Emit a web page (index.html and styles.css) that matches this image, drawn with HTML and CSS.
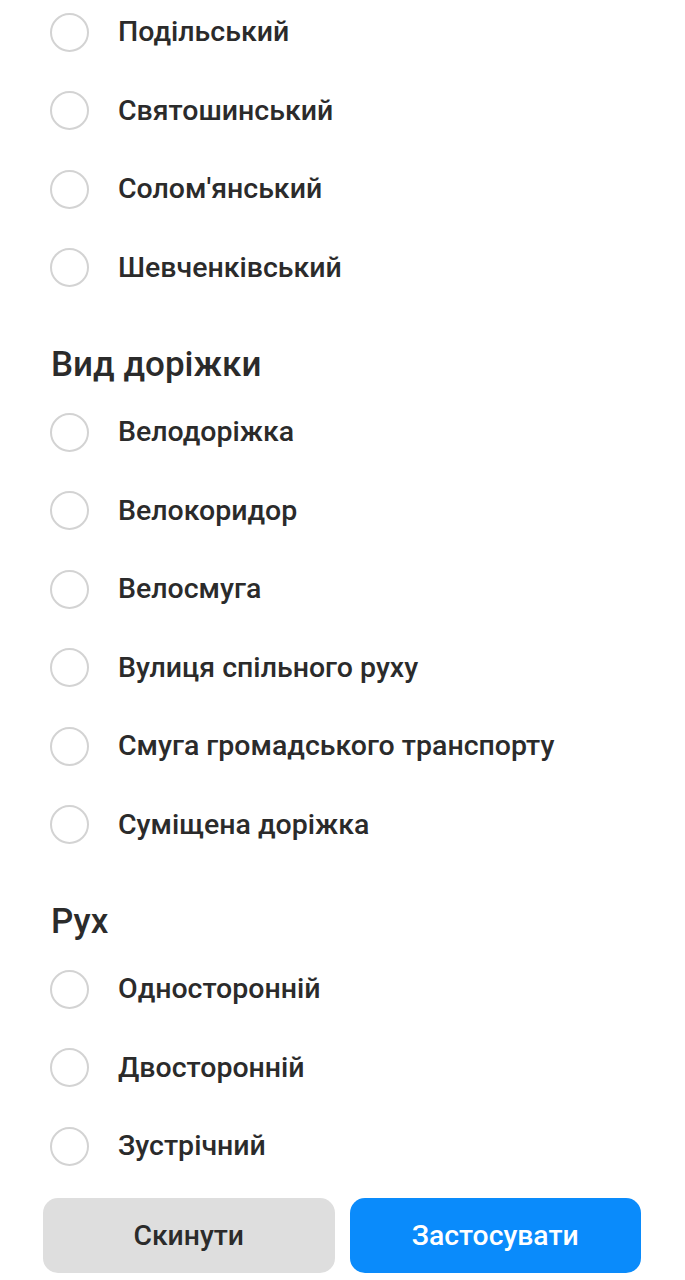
FILE: index.html
```html
<!DOCTYPE html>
<html lang="uk">
<head>
<meta charset="utf-8">
<title>Фільтри</title>
<link rel="stylesheet" href="styles.css">
</head>
<body>
<div class="page">
  <div class="list">
    <div class="group">
      <div class="item"><span class="radio"></span><span class="label">Подільський</span></div>
      <div class="item"><span class="radio"></span><span class="label">Святошинський</span></div>
      <div class="item"><span class="radio"></span><span class="label">Солом'янський</span></div>
      <div class="item"><span class="radio"></span><span class="label">Шевченківський</span></div>
    </div>
    <div class="group">
      <h2 class="heading">Вид доріжки</h2>
      <div class="item"><span class="radio"></span><span class="label">Велодоріжка</span></div>
      <div class="item"><span class="radio"></span><span class="label">Велокоридор</span></div>
      <div class="item"><span class="radio"></span><span class="label">Велосмуга</span></div>
      <div class="item"><span class="radio"></span><span class="label">Вулиця спільного руху</span></div>
      <div class="item"><span class="radio"></span><span class="label">Смуга громадського транспорту</span></div>
      <div class="item"><span class="radio"></span><span class="label">Суміщена доріжка</span></div>
    </div>
    <div class="group">
      <h2 class="heading">Рух</h2>
      <div class="item"><span class="radio"></span><span class="label">Односторонній</span></div>
      <div class="item"><span class="radio"></span><span class="label">Двосторонній</span></div>
      <div class="item"><span class="radio"></span><span class="label">Зустрічний</span></div>
    </div>
  </div>
  <div class="actions">
    <button class="btn btn-reset">Скинути</button>
    <button class="btn btn-apply">Застосувати</button>
  </div>
</div>
</body>
</html>
```
FILE: styles.css
```css
html, body {
  margin: 0;
  padding: 0;
  background: #ffffff;
}
body {
  font-family: Roboto, "Noto Sans", "Liberation Sans", sans-serif;
  color: #2a2a2a;
  width: 685px;
  height: 1280px;
  overflow: hidden;
}
.page {
  display: flex;
  flex-direction: column;
  height: 1280px;
}
.list {
  margin-top: -7px;
  padding-left: 50px;
}
.item {
  display: flex;
  align-items: center;
  height: 78.5px;
}
.radio {
  box-sizing: border-box;
  width: 39px;
  height: 39px;
  border: 2px solid #d3d3d3;
  border-radius: 50%;
  flex: none;
}
.label {
  margin-left: 29px;
  font-size: 28.5px;
  font-weight: 500;
  line-height: 1;
  color: #2b2b2b;
}
.heading {
  margin: 38px 0 8px 1px;
  height: 40px;
  line-height: 40px;
  font-size: 35px;
  font-weight: 500;
  color: #2b2b2b;
}
.actions {
  display: flex;
  gap: 15px;
  padding: 0 44px 0 43px;
  margin-top: 12px;
}
.btn {
  flex: 1;
  height: 75px;
  border: none;
  border-radius: 15px;
  font-family: Roboto, "Noto Sans", "Liberation Sans", sans-serif;
  font-size: 28.3px;
  font-weight: 500;
  display: flex;
  align-items: center;
  justify-content: center;
  padding: 0;
}
.btn-reset {
  background: #dedede;
  color: #2b2b2b;
}
.btn-apply {
  background: #0a8bfb;
  color: #ffffff;
}
```
